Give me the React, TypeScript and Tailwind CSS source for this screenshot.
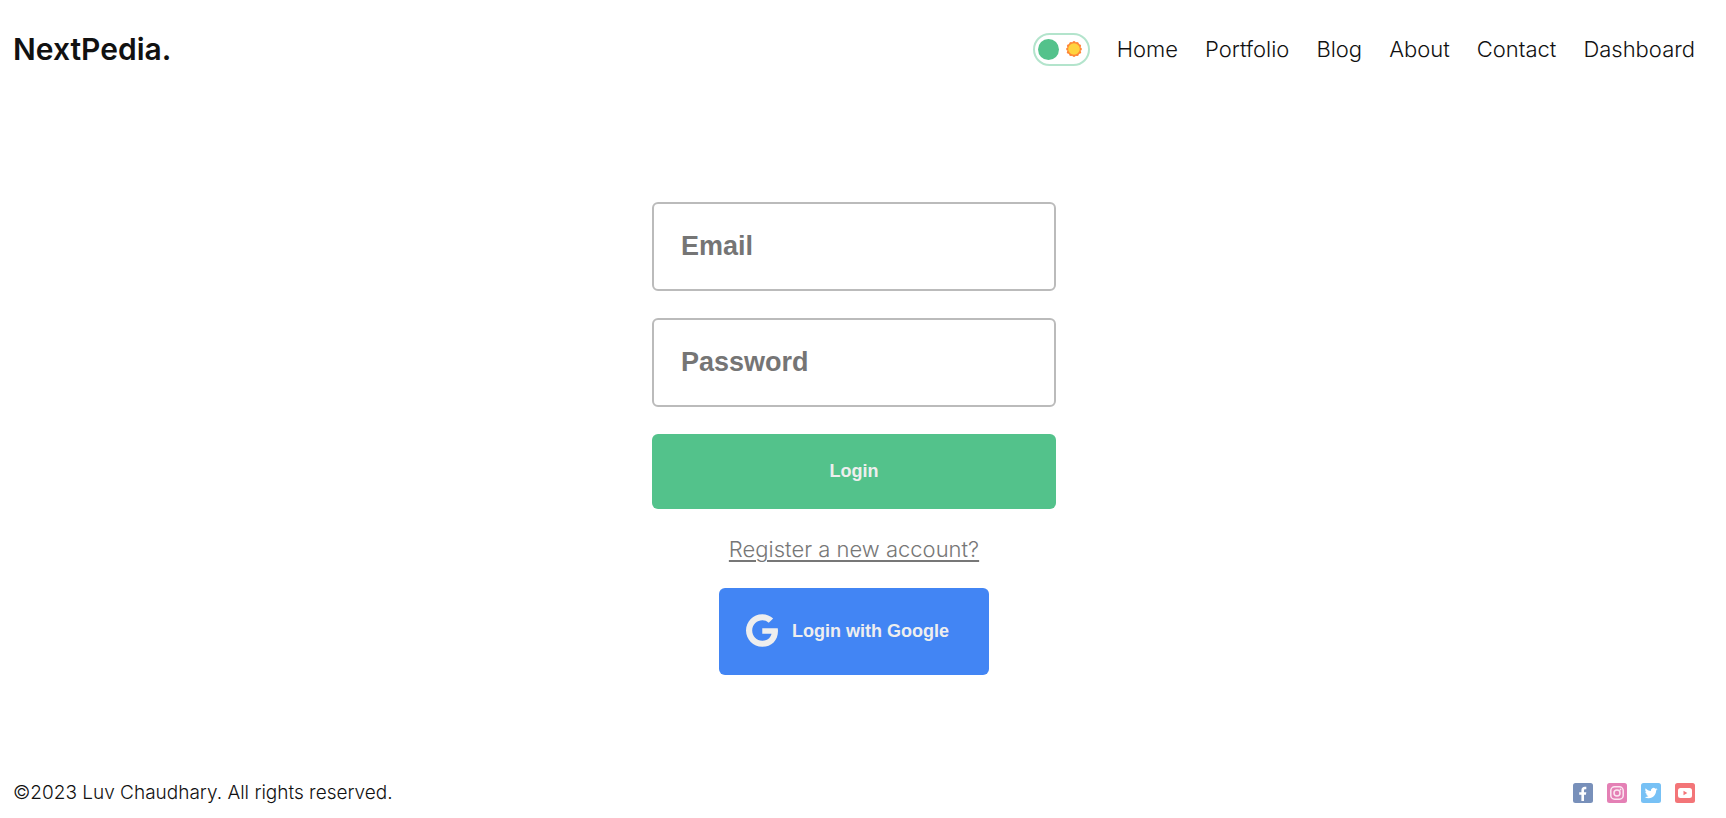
const navLinks = ['Home', 'Portfolio', 'Blog', 'About', 'Contact', 'Dashboard'];

function Sun() {
  const petals = Array.from({ length: 12 }, (_, i) => (i * Math.PI) / 6);
  return (
    <svg viewBox="0 0 16 16" className="size-4" aria-hidden="true">
      {petals.map((a) => (
        <circle key={a} cx={8 + 6.3 * Math.cos(a)} cy={8 + 6.3 * Math.sin(a)} r="1.6" fill="#ff8635" />
      ))}
      <circle cx="8" cy="8" r="6.9" fill="#ff8635" />
      <circle cx="8" cy="8" r="5.8" fill="#ffd33f" />
    </svg>
  );
}

function Header() {
  return (
    <header className="flex h-[98px] items-center justify-between">
      <a href="#" className="text-[30px] font-semibold">
        NextPedia.
      </a>
      <nav className="flex items-center gap-[27px]">
        <button
          type="button"
          aria-label="Toggle theme"
          className="flex h-[33px] w-[57px] items-center justify-between rounded-full border-2 border-[#53c28b70] pr-1.5 pl-[3px]"
        >
          <span className="size-[21px] rounded-full bg-[#53c28b]" />
          <Sun />
        </button>
        {navLinks.map((label) => (
          <a key={label} href="#" className="text-[22px] font-light">
            {label}
          </a>
        ))}
      </nav>
    </header>
  );
}

const fieldClass =
  'h-[89px] w-full rounded-md border-2 border-[#bbb] bg-transparent px-[27px] pb-px font-["Liberation_Sans",Arial,sans-serif] text-[27px] font-bold text-[#111] outline-none placeholder:text-[#757575]';

function LoginForm() {
  return (
    <main className="flex flex-1 flex-col items-center pt-[104px]">
      <form className="flex w-full max-w-[404px] flex-col gap-[27px]" onSubmit={(e) => e.preventDefault()}>
        <input type="email" aria-label="Email" placeholder="Email" className={fieldClass} />
        <input type="password" aria-label="Password" placeholder="Password" className={fieldClass} />
        <button
          type="submit"
          className='h-[75px] rounded-md bg-[#53c28b] pb-0.5 font-["Liberation_Sans",Arial,sans-serif] text-lg font-bold text-[#eee]'
        >
          Login
        </button>
      </form>
      <a
        href="#"
        className="mt-[27px] text-[22px] leading-[27px] font-light text-[#777] underline decoration-2 underline-offset-3"
      >
        Register a new account?
      </a>
      <button
        type="button"
        className='mt-[25px] flex h-[87px] w-[270px] items-center gap-[14px] rounded-md bg-[#4285f4] px-[27px] pb-0.5 font-["Liberation_Sans",Arial,sans-serif] text-lg font-bold text-[#eee]'
      >
        <svg viewBox="0 8 488 496" className="h-[33px] w-8 shrink-0" fill="currentColor" aria-hidden="true">
          <path d="M488 261.8C488 403.3 391.1 504 248 504 110.8 504 0 393.2 0 256S110.8 8 248 8c66.8 0 123 24.5 166.3 64.9l-67.5 64.9C258.5 52.6 94.3 116.6 94.3 256c0 86.5 69.1 156.6 153.7 156.6 98.2 0 135-70.4 140.8-106.9H248v-85.3h236.1c2.3 12.7 3.9 24.9 3.9 41.4z" />
        </svg>
        Login with Google
      </button>
    </main>
  );
}

function Footer() {
  return (
    <footer className="flex h-[50px] items-center justify-between">
      <p className="text-[19px] font-light">©2023 Luv Chaudhary. All rights reserved.</p>
      <div className="flex gap-[14px]">
        <a href="#" aria-label="Facebook">
          <svg viewBox="0 0 20 20" className="size-5">
            <rect width="20" height="20" rx="2.5" fill="#7890ba" />
            <path
              d="M8.4 18v-6.3H6.2V9.2h2.2V7.3c0-2.3 1.3-3.6 3.4-3.6.7 0 1.3.1 1.5.1v2.4h-1c-1 0-1.3.5-1.3 1.3v1.7h2.3l-.4 2.5H11V18z"
              fill="#fff"
            />
          </svg>
        </a>
        <a href="#" aria-label="Instagram">
          <svg viewBox="0 0 20 20" className="size-5">
            <rect width="20" height="20" rx="2.5" fill="#e480b5" />
            <rect x="3.8" y="3.8" width="12.4" height="12.4" rx="3.8" fill="none" stroke="#fbe7f1" strokeWidth="1.5" />
            <circle cx="10" cy="10" r="3" fill="none" stroke="#fbe7f1" strokeWidth="1.5" />
            <circle cx="13.5" cy="6.5" r=".9" fill="#fbe7f1" />
          </svg>
        </a>
        <a href="#" aria-label="Twitter">
          <svg viewBox="0 0 20 20" className="size-5">
            <rect width="20" height="20" rx="2.5" fill="#77c1f5" />
            <path
              transform="translate(3.7 3.7) scale(.53)"
              d="M23.95 4.57a10 10 0 0 1-2.82.77 4.96 4.96 0 0 0 2.16-2.72c-.95.55-2 .95-3.13 1.18a4.92 4.92 0 0 0-8.38 4.48C7.69 8.1 4.07 6.13 1.64 3.16a4.92 4.92 0 0 0 1.52 6.57 4.9 4.9 0 0 1-2.23-.61v.06a4.92 4.92 0 0 0 3.95 4.83 5 5 0 0 1-2.21.08 4.94 4.94 0 0 0 4.6 3.42A9.87 9.87 0 0 1 0 19.54a14 14 0 0 0 7.55 2.21c9.05 0 14-7.5 14-13.98 0-.21 0-.42-.02-.63a9.94 9.94 0 0 0 2.46-2.55z"
              fill="#fff"
            />
          </svg>
        </a>
        <a href="#" aria-label="YouTube">
          <svg viewBox="0 0 20 20" className="size-5">
            <rect width="20" height="20" rx="2.5" fill="#f37578" />
            <rect x="3" y="5" width="14" height="10" rx="2.5" fill="#fff" />
            <path d="M8.5 7.8v4.4l3.8-2.2z" fill="#f37578" />
          </svg>
        </a>
      </div>
    </footer>
  );
}

export default function App() {
  return (
    <div className='flex min-h-screen flex-col bg-white pr-[31px] pl-[13px] font-["Inter",sans-serif] text-[#111]'>
      <Header />
      <LoginForm />
      <Footer />
    </div>
  );
}
